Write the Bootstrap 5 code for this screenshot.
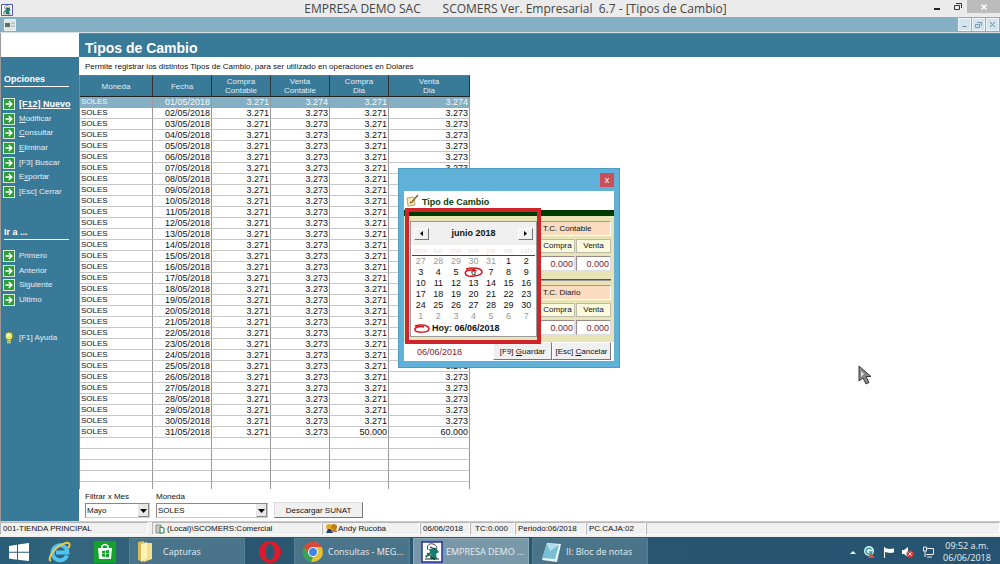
<!DOCTYPE html>
<html lang="es">
<head>
<meta charset="utf-8">
<meta name="viewport" content="width=device-width, initial-scale=1">
<title>SCOMERS - Tipos de Cambio</title>
<link href="https://cdn.jsdelivr.net/npm/bootstrap@5.3.0/dist/css/bootstrap.min.css" rel="stylesheet">
<style>
:root{--teal:#397a99;--sky:#85afc2;--ui:"Liberation Sans",Arial,sans-serif;--seg:"Open Sans","Noto Sans",sans-serif}
body{font-family:var(--ui);font-size:8px;line-height:11px;color:#111;background:#fff}
button,select,input{font:inherit;color:inherit}
.titlebar{height:17px;background:#ebebeb;font:12px/17px var(--seg);color:#444}
.titlebar svg,.menubar svg{display:block}
.title-text{white-space:pre;padding-left:90px}
.sysbtn{border:0;background:none;padding:0;width:20px;height:13px;display:flex;align-items:center;justify-content:center}
.sysclose{width:33px;background:#bcbcbc}
.menubar{height:16px;background:var(--sky);border-bottom:1px solid #d4dde2}
.mdi{gap:1px;margin-right:1px}
.mdibtn{width:13px;height:13px;padding:0;border:1px solid #eef5fa;background:#d3e3f0;display:flex;align-items:center;justify-content:center}
.side{width:79px;background:var(--teal);color:#e9f2f6;border-left:1px solid #999}
.side-logo{height:24px;background:#fff}
.side h2{font-size:9px;line-height:12px;font-weight:700;margin:16px 10px 0 3px;padding-bottom:1px;border-bottom:1px solid #fff;color:#fff}
.side h2.second{margin-top:27px}
.side a{color:#e4eff4;text-decoration:none;height:14px;line-height:14px;gap:4px;padding-left:2px;white-space:nowrap}
.side a.current{font-size:9px;font-weight:700;text-decoration:underline;color:#fff}
.opts{height:102px;margin-top:10px}
.goto{height:58px;margin-top:9px}
.page-head{height:24px;background:var(--teal);border-top:1px solid #6d8797}
.page-head h1{font:700 14px/29px "Liberation Sans",sans-serif;color:#fff;margin:0 6px}
.desc{height:18px;line-height:20px;padding-left:6px;margin:0}
.gridwrap{width:391px;height:414px;overflow:hidden;border-left:1px solid #888}
.rates{width:390px;table-layout:fixed;border-collapse:separate;border-spacing:0}
.rates th{height:22px;background:var(--teal);color:#e2edf2;font-weight:400;line-height:9px;text-align:center;padding:0;border-right:1px solid #333;border-top:1px solid #777;border-bottom:1px solid #222}
.rates td{height:11px;font-size:9px;line-height:10px;padding:0 1px;text-align:right;border-right:1px solid #999;border-bottom:1px solid #c8c8c8;white-space:nowrap}
.rates td:first-child{text-align:left;font-size:8px}
.rates tr.sel td{background:var(--sky);color:#f4f8fa;border-bottom-color:var(--sky)}
.filters{height:32px;padding-left:6px;gap:6px}
.filters label{display:block;line-height:13px;padding-top:1px}
.filters select{display:block;height:15px;border:1px solid #888;border-right-color:#ccc;border-bottom-color:#ccc;border-radius:0;padding:0 1px;appearance:none;background:#fff url("data:image/svg+xml,%3Csvg xmlns='http://www.w3.org/2000/svg' width='11' height='13'%3E%3Cpath d='M0 0h11v13H0z' fill='%23e8e8e8'/%3E%3Cpath d='M.5 12.5h10V0' fill='none' stroke='%23888'/%3E%3Cpath d='M2 5h7L5.500 9z'/%3E%3C/svg%3E") no-repeat right center}
#mes{width:65px}
#mon{width:112px}
.sunat{width:89px;height:16px;margin-top:13px}
.raised{background:#f0f0f0;border:1px solid #fff;border-right-color:#777;border-bottom-color:#777;border-radius:0;padding:0;white-space:nowrap}
.sunat.raised{border-left-color:#ddd;border-top-color:#ddd}
.status{height:16px;background:#f0f0f0;border-top:1px solid #ccc;line-height:12px}
.status .pane{height:13px;border:1px solid #b5b5b5;border-right-color:#fff;border-bottom-color:#fff;padding-left:2px;white-space:nowrap;overflow:hidden;flex:none}
.status .pane:last-child{flex:1}
.p-date,.p-tc{font-size:8px}
.taskbar{height:29px;background:linear-gradient(90deg,#285d78 0,#34677e 80px,#2a5872 200px,#265470);font:9px/12px var(--seg);color:#e7eff3}
.taskbar button{border:0;background:none;padding:0;color:inherit}
.taskbar .task{width:116px;height:28px;background:#4a7489;border:1px solid #55808f;gap:8px;padding-left:7px;white-space:nowrap}
.taskbar .active{background:#7898aa;border-color:#8fabb9}
.clock{width:58px;text-align:center}
.dlg{position:absolute;left:398px;top:168px;width:222px;background:#5fb1d8;border:1px solid #4c9cc4;padding:0 5px 6px}
.dlg-title{height:22px;padding:4px 0 0}
.dlg-close{width:14px;height:14px;background:#c9505a;border:0;color:#fff;padding:0;font-size:9px;line-height:12px}
.dlg-head{height:19px;background:#fff;color:#07420f;font-weight:700;font-size:9px;gap:3px;padding:3px 0 0 2px;line-height:16px}
.strip{height:6px;background:#003c00}
.dlg-body{background:#e8e4b5;height:126px;padding:5px 3px 0 6px}
.cal{width:127px;height:116px;background:#fff;border:1px solid #999}
.cal-head{height:23px;background:#f0f0f0;font-weight:700;font-size:9px;padding:0 3px}
.cal-head button{width:15px;height:12px;display:flex;align-items:center;justify-content:center}
.days{width:123px;table-layout:fixed;margin:0 1px;text-align:center;border-collapse:separate;border-spacing:0}
.days th{font-weight:400;font-size:7px;line-height:9px;height:11px;color:#e4e4e4;padding:0;border-bottom:1px solid #444}
.days td{padding:0;height:11px;line-height:11px;font-size:9px}
.days .off{color:#999}
.days .hoy{position:relative}
.ring{position:absolute;left:-1px;top:0}
.today{height:13px;font-weight:700;font-size:9px;gap:2px;padding-left:3px;line-height:13px}
.tc{width:72px;margin-left:3px}
.tc-name{height:15px;background:#fbdcc0;border:1px solid #a99;border-right-color:#fff;border-bottom-color:#fff;padding-left:2px;line-height:13px}
.tc-row{margin-top:3px;gap:1px}
.tc-lab{height:14px;background:#fbfadc;border:1px solid #bba;width:35px;text-align:center;line-height:12px}
.tc input{width:35px;height:15px;background:#fff;border:1px solid #988;border-right-color:#ddd;border-bottom-color:#ddd;color:#7a1b32;text-align:right;padding:0 1px;font-size:9px}
.rule{height:2px;border-top:1px solid #555;border-bottom:1px solid #999}
.dlg-foot{height:19px;background:#fff;padding-right:3px}
.dlg-foot .fdate{color:#8c2030;padding:5px 0 0 13px;font-size:9px}
.dlg-foot button{height:18px;width:59px}
.redbox{position:absolute;left:6px;top:39px;width:136px;height:136px;border:4px solid #d1232a;pointer-events:none}
.cursor{position:absolute;left:857px;top:364px}
</style>
</head>
<body class="min-vh-100 d-flex flex-column position-relative">
<svg width="0" height="0" class="position-absolute" aria-hidden="true">
 <symbol id="go" viewBox="0 0 12 12"><path fill="#d8ead4" d="M0 0h12v12H0z"/><path fill="#2f9b3c" d="M1 1h10v10H1z"/><path d="M2.500 6h6M5.800 3l3 3-3 3" fill="none" stroke="#fff" stroke-width="1.500"/></symbol>
 <symbol id="app" viewBox="0 0 22 22"><path fill="#fff" stroke="#29309a" stroke-width="1.500" d="M1 1h20v20H1z"/><path d="M7 9C5 4 9 2 12 3s5 3 3 6" fill="none" stroke="#444"/><path d="M8 8l7-1 3 4-3 2 1 5H9l1-5-5 4-1-2 5-4z" fill="#16806f"/><path d="M4 18h14M6 12l8 7M9 6l5 2" stroke="#222" fill="none"/></symbol>
</svg>

<header class="titlebar d-flex align-items-start">
 <svg class="mt-1 flex-shrink-0" width="14" height="12"><use href="#app"/></svg>
 <div class="title-text flex-fill text-center">EMPRESA DEMO SAC       SCOMERS Ver. Empresarial  6.7 - [Tipos de Cambio]</div>
 <button class="sysbtn" aria-label="Minimizar"><svg width="8" height="8"><path d="M1 6h6" stroke="#222" stroke-width="2"/></svg></button>
 <button class="sysbtn" aria-label="Restaurar"><svg width="9" height="9" fill="none" stroke="#333"><path d="M1.500 3.500h5v4h-5zM3 1.500h5.500V6"/></svg></button>
 <button class="sysbtn sysclose" aria-label="Cerrar"><svg width="8" height="8"><path d="M1.500 1.500l5 5m0-5l-5 5" stroke="#fff" stroke-width="1.500"/></svg></button>
</header>
<nav class="menubar d-flex align-items-center" aria-label="Menú">
 <svg class="mx-1" width="12" height="12"><path d="M.5.500h11v11H.5z" fill="#dfe6e6" stroke="#eee"/><path d="M1 4h5v4H1z" fill="#59706c"/><path d="M7 4h4M7 7h4" stroke="#aaa"/></svg>
 <div class="mdi ms-auto d-flex">
 <button class="mdibtn" aria-label="Minimizar documento"><svg width="7" height="7"><path d="M1.500 5.500h4" stroke="#688"/></svg></button>
 <button class="mdibtn" aria-label="Restaurar documento"><svg width="7" height="7" fill="none" stroke="#79a"><path d="M.5 3.500h4v3h-4zM2 1.500h4.500V5"/></svg></button>
 <button class="mdibtn" aria-label="Cerrar documento"><svg width="7" height="7"><path d="M1 1l5 5m0-5L1 6" stroke="#688"/></svg></button>
 </div>
</nav>

<div class="d-flex flex-fill">
 <aside class="side flex-shrink-0">
  <div class="side-logo"></div>
  <h2>Opciones</h2>
  <nav class="opts d-flex flex-column justify-content-between">
   <a class="current d-flex align-items-center" href="#"><svg width="12" height="12"><use href="#go"/></svg><span>[F12] Nuevo</span></a>
   <a class="d-flex align-items-center" href="#"><svg width="12" height="12"><use href="#go"/></svg><span><u>M</u>odificar</span></a>
   <a class="d-flex align-items-center" href="#"><svg width="12" height="12"><use href="#go"/></svg><span><u>C</u>onsultar</span></a>
   <a class="d-flex align-items-center" href="#"><svg width="12" height="12"><use href="#go"/></svg><span><u>E</u>liminar</span></a>
   <a class="d-flex align-items-center" href="#"><svg width="12" height="12"><use href="#go"/></svg><span>[F3] Buscar</span></a>
   <a class="d-flex align-items-center" href="#"><svg width="12" height="12"><use href="#go"/></svg><span>E<u>x</u>portar</span></a>
   <a class="d-flex align-items-center" href="#"><svg width="12" height="12"><use href="#go"/></svg><span>[Esc] Cerrar</span></a>
  </nav>
  <h2 class="second">Ir a ...</h2>
  <nav class="goto d-flex flex-column justify-content-between">
   <a class="d-flex align-items-center" href="#"><svg width="12" height="12"><use href="#go"/></svg><span>Primero</span></a>
   <a class="d-flex align-items-center" href="#"><svg width="12" height="12"><use href="#go"/></svg><span>Anterior</span></a>
   <a class="d-flex align-items-center" href="#"><svg width="12" height="12"><use href="#go"/></svg><span>Siguiente</span></a>
   <a class="d-flex align-items-center" href="#"><svg width="12" height="12"><use href="#go"/></svg><span>Ultimo</span></a>
  </nav>
  <a class="d-flex align-items-center mt-4" href="#"><svg width="12" height="14"><circle cx="6" cy="5" r="4" fill="#e6ec6c" stroke="#6d7f32"/><circle cx="5" cy="4" r="1.500" fill="#fffff0"/><path d="M4 9.500h4M4 11.500h4" stroke="#c9d089" stroke-width="1.500"/></svg><span>[F1] Ayuda</span></a>
 </aside>
 <main class="flex-fill">
  <div class="page-head"><h1>Tipos de Cambio</h1></div>
  <p class="desc">Permite registrar los distintos Tipos de Cambio, para ser utilizado en operaciones en Dolares</p>
  <div class="gridwrap">
   <table class="rates">
    <colgroup><col style="width:73px"><col style="width:59px"><col style="width:59px"><col style="width:59px"><col style="width:59px"><col style="width:81px"></colgroup>
    <thead><tr><th>Moneda</th><th>Fecha</th><th>Compra<br>Contable</th><th>Venta<br>Contable</th><th>Compra<br>Dia</th><th>Venta<br>Dia</th></tr></thead>
    <tbody id="rows"></tbody>
   </table>
  </div>
  <form class="filters d-flex align-items-start">
   <div><label for="mes">Filtrar x Mes</label><select id="mes"><option>Mayo</option></select></div>
   <div><label for="mon">Moneda</label><select id="mon"><option>SOLES</option></select></div>
   <button type="button" class="raised sunat">Descargar SUNAT</button>
  </form>
 </main>
</div>

<footer class="status d-flex align-items-start">
 <div class="pane" style="width:148px">001-TIENDA PRINCIPAL</div>
 <div class="pane d-flex ms-1" style="width:170px"><svg width="12" height="11" class="flex-shrink-0"><path d="M1 2h5v8H1z" fill="#ccc" stroke="#888"/><path d="M5 4l4 1v5H5z" fill="#fff" stroke="#277a42"/></svg><span>(Local)\SCOMERS:Comercial</span></div>
 <div class="pane d-flex" style="width:98px"><svg width="13" height="11" class="flex-shrink-0"><circle cx="4" cy="4" r="3" fill="#e3a928"/><circle cx="9" cy="4" r="3" fill="#bd8117"/><path d="M1 10l2-4h3l2 4z" fill="#243f73"/><path d="M6 9l2-3h3l1 3z" fill="#c73"/></svg><span>Andy Rucoba</span></div>
 <div class="pane" style="width:50px">06/06/2018</div>
 <div class="pane" style="width:45px;padding-left:4px">TC:0.000</div>
 <div class="pane" style="width:71px">Periodo:06/2018</div>
 <div class="pane" style="width:60px">PC.CAJA:02</div>
 <div class="pane"></div>
</footer>

<footer class="taskbar d-flex align-items-center">
 <button aria-label="Inicio" style="width:38px"><svg width="20" height="18"><path fill="#fff" d="M0 3l8-1.200v7H0zM9 1.600L20 0v8.800H9zM0 9.800h8v7L0 15.600zM9 9.800h11V18L9 16.800z"/></svg></button>
 <button aria-label="Internet Explorer" style="width:43px"><svg width="24" height="24" fill="none"><path d="M19 15.500A7.500 7.500 0 1 1 19.500 12.500H8" stroke="#50c4f2" stroke-width="4"/><path d="M3 21C-2 19 8 5 18 3c5-1 4 3 2 5" stroke="#f2c841" stroke-width="2"/></svg></button>
 <button aria-label="Tienda" style="width:48px"><svg width="22" height="22"><path fill="#13a32b" d="M0 0h22v22H0z"/><path d="M8 7V5q3-3 6 0v2" fill="none" stroke="#fff" stroke-width="1.500"/><path fill="#fff" d="M4 7h14l-1 11H5z"/><path fill="#13a32b" d="M8 10l3-.5v3H8zM11.600 9.400l3.400-.4v3.500h-3.400zM8 13h3v3l-3-.5zM11.600 13H15v3.500l-3.400-.4z"/></svg></button>
 <button class="task d-flex align-items-center"><svg width="18" height="23"><path fill="#d8b85a" d="M1 2l6-1v21l-6-2z"/><path fill="#f8df8d" d="M7 3h8v16l-8 3z"/><path fill="#fff2b5" d="M4 4l6-2v16l-6 4z"/></svg>Capturas</button>
 <button aria-label="Opera" style="width:49px"><svg width="22" height="22"><path fill="#d91c2b" fill-rule="evenodd" d="M11 0a11 11 0 1 0 0 22a11 11 0 1 0 0-22zm0 3c6 0 6 16 0 16s-6-16 0-16z"/></svg></button>
 <button class="task d-flex align-items-center" style="gap:4px"><svg width="22" height="22"><circle cx="11" cy="11" r="10" fill="#e5c032"/><path fill="#da4637" d="M2 6a10.500 10.500 0 0 1 18 0h-9l-5 6z"/><path fill="#39a054" d="M2 6l6 9 3 1-2 5A10 10 0 0 1 2 6z"/><circle cx="11" cy="11" r="5" fill="#fff"/><circle cx="11" cy="11" r="4" fill="#4385e8"/></svg>Consultas - MEG...</button>
 <button class="task active d-flex align-items-center" style="gap:3px;margin-left:3px"><svg width="22" height="22"><use href="#app"/></svg>EMPRESA DEMO ...</button>
 <button class="task d-flex align-items-center" style="gap:4px;margin-left:3px"><svg width="22" height="22"><path fill="#eaf5f7" d="M7 2l14 1-4 18-15-2z"/><path fill="#78bfd4" d="M7 3l12 1-4 14-13-1z"/><path fill="#b1dfeb" d="M7 3l12 1-9 6z"/></svg>II: Bloc de notas</button>
 <div class="ms-auto d-flex align-items-center gap-2" role="group" aria-label="Notificaciones">
  <svg width="6" height="6"><path d="M0 5l3-3 3 3z" fill="#fff"/></svg>
  <svg width="11" height="12"><circle cx="5" cy="5" r="5" fill="#d8f0ee"/><path d="M7.500 3.500A3 3 0 1 0 8 6H5" fill="none" stroke="#2f9d9b" stroke-width="1.500"/><path d="M7 7l4 5H4z" fill="#e04a3d"/></svg>
  <svg width="11" height="12"><path d="M1.500 1v11" stroke="#fff"/><path d="M2 2l4 1 5-.5v4L7 7 2 6z" fill="#fff"/></svg>
  <svg width="12" height="12"><path d="M0 4h2l4-3v10L2 8H0z" fill="#fff"/><circle cx="8" cy="8" r="3.500" fill="#dc3c35"/><path d="M6.500 6.500l3 3m0-3l-3 3" stroke="#fff"/></svg>
  <svg width="12" height="12" fill="none" stroke="#e6eef2"><path d="M4 2.500h7.500v6H4M5 11h5M1.500 1h3v4h-3zM3 5v6"/></svg>
 </div>
 <div class="clock ms-1 me-1">09:52 a.m.<br>06/06/2018</div>
</footer>

<section class="dlg" role="dialog" aria-labelledby="dt">
 <div class="dlg-title d-flex justify-content-end"><button class="dlg-close" aria-label="Cerrar diálogo">x</button></div>
 <div class="dlg-head d-flex"><svg width="13" height="13"><path d="M1 4l7-1 1 8-7 1z" fill="#f6e8b7" stroke="#baa668"/><path d="M12 1L6 8l-2 1" stroke="#8a6320" stroke-width="1.500" fill="none"/></svg><span id="dt">Tipo de Cambio</span></div>
 <div class="strip"></div>
 <div class="dlg-body d-flex">
  <div class="cal flex-shrink-0">
   <div class="cal-head d-flex align-items-center justify-content-between">
    <button class="raised" aria-label="Mes anterior"><svg width="5" height="5"><path d="M4 0v5L1 2.500z"/></svg></button><span>junio 2018</span><button class="raised" aria-label="Mes siguiente"><svg width="5" height="5"><path d="M1 0v5l3-2.500z"/></svg></button>
   </div>
   <table class="days"><thead><tr><th>dom</th><th>lun</th><th>mar</th><th>mié</th><th>jue</th><th>vie</th><th>sáb</th></tr></thead><tbody id="days"></tbody></table>
   <div class="today d-flex align-items-center"><svg width="16" height="9" fill="none" stroke="#d9151e" stroke-width="1.500"><path d="M1 2c6-2 14-1 14 3S2 9 1 6s5-4 9-3"/></svg><span>Hoy: 06/06/2018</span></div>
  </div>
  <div class="tc">
   <div class="tc-name">T.C. Contable</div>
   <div class="tc-row d-flex"><label class="tc-lab" for="cc">Compra</label><label class="tc-lab" for="cv">Venta</label></div>
   <div class="tc-row d-flex"><input id="cc" value="0.000"><input id="cv" value="0.000"></div>
   <div class="rule mt-2 mb-1"></div>
   <div class="tc-name">T.C. Diario</div>
   <div class="tc-row d-flex"><label class="tc-lab" for="dc">Compra</label><label class="tc-lab" for="dv">Venta</label></div>
   <div class="tc-row d-flex"><input id="dc" value="0.000"><input id="dv" value="0.000"></div>
  </div>
 </div>
 <div class="dlg-foot d-flex"><span class="fdate me-auto">06/06/2018</span><button class="raised">[F9] <u>G</u>uardar</button><button class="raised">[Esc] <u>C</u>ancelar</button></div>
 <div class="redbox"></div>
</section>
<svg class="cursor" width="18" height="24"><path d="M2 2v15l4-3 3 6 3-1.500-3-6h5z" fill="#888" stroke="#3a3a3a"/><path d="M4 7v6l3-3z" fill="#ddd"/></svg>

<script>
const rows = [];
for (let d = 1; d <= 31; d++) {
  const venta = d === 1 ? '3.274' : '3.273';
  const dia = d === 31 ? ['50.000', '60.000'] : ['3.271', venta];
  rows.push(`<tr${d === 1 ? ' class="sel"' : ''}><td>SOLES</td><td>${String(d).padStart(2, '0')}/05/2018</td><td>3.271</td><td>${venta}</td><td>${dia[0]}</td><td>${dia[1]}</td></tr>`);
}
for (let i = 0; i < 5; i++) rows.push('<tr>' + '<td></td>'.repeat(6) + '</tr>');
document.getElementById('rows').innerHTML = rows.join('');

let cal = '';
for (let i = 0; i < 42; i++) {
  const n = i < 5 ? 27 + i : i < 35 ? i - 4 : i - 34;
  const cls = i < 5 || i > 34 ? 'off' : n === 6 ? 'hoy' : '';
  const ring = n === 6 && i < 35 ? '<svg class="ring" width="19" height="11" fill="none" stroke="#d9151e" stroke-width="1.500"><path d="M2 2c7-2 16-1 16 3S3 11 1.500 7s6-5 11-3"/></svg>' : '';
  cal += (i % 7 ? '' : '<tr>') + `<td class="${cls}">${n}${ring}</td>` + (i % 7 === 6 ? '</tr>' : '');
}
document.getElementById('days').innerHTML = cal;
</script>
<script src="https://cdn.jsdelivr.net/npm/bootstrap@5.3.0/dist/js/bootstrap.bundle.min.js"></script>
</body>
</html>
